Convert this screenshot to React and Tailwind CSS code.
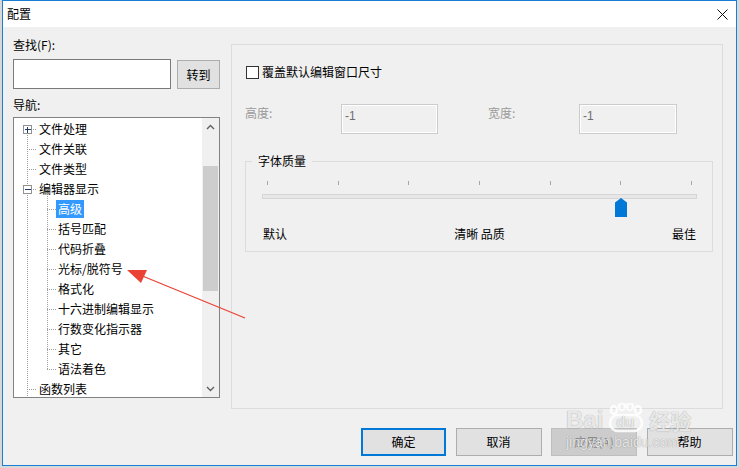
import React from "react";

const items = [
  { t: "文件处理", l: 0, box: "+" },
  { t: "文件关联", l: 0 },
  { t: "文件类型", l: 0 },
  { t: "编辑器显示", l: 0, box: "-" },
  { t: "高级", l: 1, sel: true },
  { t: "括号匹配", l: 1 },
  { t: "代码折叠", l: 1 },
  { t: "光标/脱符号", l: 1 },
  { t: "格式化", l: 1 },
  { t: "十六进制编辑显示", l: 1 },
  { t: "行数变化指示器", l: 1 },
  { t: "其它", l: 1 },
  { t: "语法着色", l: 1 },
  { t: "函数列表", l: 0 },
];

function TreeLines() {
  const c = (i) => 11 + 20 * i + 0.5;
  const lvl0 = [0, 1, 2, 3, 13];
  const lvl1 = [4, 5, 6, 7, 8, 9, 10, 11, 12];
  return (
    <svg className="absolute left-0 top-0 pointer-events-none" width="188" height="279">
      <g stroke="#a0a0a0" strokeWidth="1" strokeDasharray="1 1" shapeRendering="crispEdges">
        <line x1="13.5" y1="11" x2="13.5" y2="279" />
        <line x1="33.5" y1={c(3)} x2="33.5" y2={c(12)} />
        {lvl0.map((i) => (
          <line key={"a" + i} x1="13" y1={c(i)} x2="23" y2={c(i)} />
        ))}
        {lvl1.map((i) => (
          <line key={"b" + i} x1="33" y1={c(i)} x2="42" y2={c(i)} />
        ))}
      </g>
      {[0, 3].map((i) => (
        <g key={"x" + i} shapeRendering="crispEdges">
          <rect x="9.5" y={c(i) - 4.5} width="8" height="8" fill="#fff" stroke="#919191" />
          <line x1="11" y1={c(i)} x2="17" y2={c(i)} stroke="#1c3a6e" />
          {i === 0 && <line x1="13.5" y1={c(i) - 3} x2="13.5" y2={c(i) + 3} stroke="#1c3a6e" />}
        </g>
      ))}
    </svg>
  );
}

export default function App() {
  return (
    <div className="w-[740px] h-[468px] bg-[#d8d8d8] overflow-hidden relative font-['Microsoft_YaHei','Noto_Sans_CJK_SC',sans-serif] text-[12px] leading-[16px] text-black">
      <div className="ml-[2px] w-[735px] h-[466px] border border-[#1a7fd4] bg-[#f0f0f0] flex flex-col">
        {/* title bar */}
        <div className="h-[26px] bg-white flex items-center justify-between pl-[4px] pr-[8px] shrink-0">
          <span className="text-[12px]">配置</span>
          <svg width="11" height="11" viewBox="0 0 11 11">
            <path d="M0.5 0.5 L10.5 10.5 M10.5 0.5 L0.5 10.5" stroke="#111" strokeWidth="1" />
          </svg>
        </div>

        {/* content */}
        <div className="flex flex-col flex-1">
          <div className="flex">
            {/* left column */}
            <div className="ml-[10px] w-[207px] pt-[10px] flex flex-col">
              <div className="h-[16px]">查找(F):</div>
              <div className="mt-[6px] flex items-start h-[30px]">
                <div className="w-[158px] h-[30px] bg-white border border-[#7a7a7a]" />
                <div className="ml-[6px] mt-[1px] w-[43px] h-[29px] bg-[#e1e1e1] border border-[#adadad] flex items-center justify-center">
                  转到
                </div>
              </div>
              <div className="mt-[8px] h-[16px]">导航:</div>
              <div className="mt-[4px] w-[207px] h-[281px] border border-[#828282] bg-white flex">
                <div className="relative w-[188px] h-[279px] overflow-hidden pt-[1px]">
                  <TreeLines />
                  {items.map((it, i) => (
                    <div
                      key={i}
                      className={
                        "relative h-[20px] flex items-center whitespace-nowrap " +
                        (it.l === 0 ? "pl-[25px]" : "pl-[42px]")
                      }
                    >
                      {it.l === 1 ? (
                        <span
                          className={
                            "px-[2px] h-[18px] flex items-center " +
                            (it.sel ? "bg-[#3399ff] text-white" : "")
                          }
                        >
                          {it.t}
                        </span>
                      ) : (
                        <span>{it.t}</span>
                      )}
                    </div>
                  ))}
                </div>
                {/* scrollbar */}
                <div className="w-[17px] h-[279px] bg-[#f0f0f0] flex flex-col">
                  <div className="h-[17px] flex items-center justify-center">
                    <svg width="9" height="6" viewBox="0 0 9 6">
                      <path d="M1 5 L4.5 1.5 L8 5" fill="none" stroke="#606060" strokeWidth="1.4" />
                    </svg>
                  </div>
                  <div className="h-[31px]" />
                  <div className="ml-[1px] w-[15px] h-[125px] bg-[#cdcdcd]" />
                  <div className="flex-1" />
                  <div className="h-[17px] flex items-center justify-center">
                    <svg width="9" height="6" viewBox="0 0 9 6">
                      <path d="M1 1 L4.5 4.5 L8 1" fill="none" stroke="#606060" strokeWidth="1.4" />
                    </svg>
                  </div>
                </div>
              </div>
            </div>

            {/* right panel */}
            <div className="ml-[11px] mt-[17px] w-[492px] h-[365px] border border-[#dcdcdc] pt-[19px] pl-[13px] flex flex-col">
              <div className="h-[16px] flex items-center">
                <div className="ml-[1px] w-[13px] h-[13px] border border-[#333333] bg-white" />
                <span className="ml-[3px]">覆盖默认编辑窗口尺寸</span>
              </div>
              <div className="mt-[24px] h-[30px] flex items-start text-[#9a9a9a]">
                <div className="w-[96px] pt-[1px]">高度:</div>
                <div className="w-[97px] h-[30px] border border-[#cccccc] shadow-[inset_0_0_0_1px_#ffffff] pt-[3px] pl-[3px] text-[#6d6d6d] font-['Liberation_Sans',sans-serif]">
                  -1
                </div>
                <div className="ml-[50px] w-[91px] pt-[1px]">宽度:</div>
                <div className="w-[98px] h-[30px] border border-[#cccccc] shadow-[inset_0_0_0_1px_#ffffff] pt-[3px] pl-[3px] text-[#6d6d6d] font-['Liberation_Sans',sans-serif]">
                  -1
                </div>
              </div>
              <fieldset className="mt-[19px] w-[468px] h-[99px] border border-[#dcdcdc] p-0 m-0">
                <legend className="ml-[6px] px-[6px] h-[16px] leading-[16px]">字体质量</legend>
                <div className="ml-[16px] w-[435px] relative">
                  <div className="mt-[12px] pl-[5px] pr-[5px] flex justify-between h-[4px]">
                    {[0, 1, 2, 3, 4, 5, 6].map((k) => (
                      <div key={k} className="w-px h-[4px] bg-[#a5a5a5]" />
                    ))}
                  </div>
                  <div className="mt-[9px] h-[5px] border border-[#d6d6d6] bg-[#e7e7e7]" />
                  <svg className="absolute left-[353px] top-[17px]" width="12" height="19" viewBox="0 0 12 19">
                    <polygon points="0,4.5 6,0 12,4.5 12,19 0,19" fill="#0078d7" />
                  </svg>
                  <div className="mt-[27px] px-[1px] flex justify-between h-[16px]">
                    <span>默认</span>
                    <span>清晰 品质</span>
                    <span>最佳</span>
                  </div>
                </div>
              </fieldset>
            </div>
          </div>

          {/* buttons */}
          <div className="mt-[19px] pl-[358px] flex gap-[9.5px]">
            <div className="w-[85px] h-[28px] border-2 border-[#0078d7] bg-[#e1e1e1] flex items-center justify-center">
              确定
            </div>
            <div className="w-[86px] h-[28px] border border-[#adadad] bg-[#e1e1e1] flex items-center justify-center">
              取消
            </div>
            <div className="w-[86px] h-[28px] border border-[#bfbfbf] bg-[#cccccc] text-[#8a8a8a] flex items-center justify-center">
              应用(A)
            </div>
            <div className="w-[86px] h-[28px] border border-[#adadad] bg-[#e1e1e1] flex items-center justify-center">
              帮助
            </div>
          </div>
        </div>
      </div>

      {/* red annotation arrow */}
      <svg className="absolute left-0 top-0 pointer-events-none" width="740" height="468">
        <line x1="245" y1="318" x2="140" y2="275" stroke="#ea4335" strokeWidth="1.3" />
        <polygon points="127,270 147,270 141,283" fill="#ea4335" />
      </svg>

      {/* watermark */}
      <div className="absolute left-[566px] top-[401px] pointer-events-none flex flex-col items-start text-white/80 [text-shadow:0_0_1px_rgba(0,0,0,0.45)]">
        <div className="flex items-end h-[32px]">
          <span className="font-['Liberation_Sans',sans-serif] font-bold text-[24px] leading-[26px]">Bai</span>
          <span className="relative ml-[2px] w-[40px] h-[30px] flex items-end justify-center">
            <svg className="absolute left-0 top-0" width="40" height="30" viewBox="0 0 40 30">
              <g fill="none" stroke="rgba(255,255,255,0.85)" strokeWidth="2.5">
                <ellipse cx="9" cy="7" rx="3" ry="4" />
                <ellipse cx="17" cy="3.5" rx="3" ry="3.5" />
                <ellipse cx="25" cy="3.5" rx="3" ry="3.5" />
                <ellipse cx="33" cy="7" rx="3" ry="4" />
                <rect x="5" y="12" width="32" height="16" rx="8" />
              </g>
            </svg>
            <span className="relative font-['Liberation_Sans',sans-serif] font-bold text-[15px] leading-[18px] mb-[2px]">du</span>
          </span>
          <span className="ml-[4px] text-[21px] leading-[26px] font-bold">经验</span>
        </div>
        <div className="font-['Liberation_Sans',sans-serif] text-[14px] leading-[16px] mt-[1px]">jingyan.baidu.com</div>
      </div>
    </div>
  );
}
